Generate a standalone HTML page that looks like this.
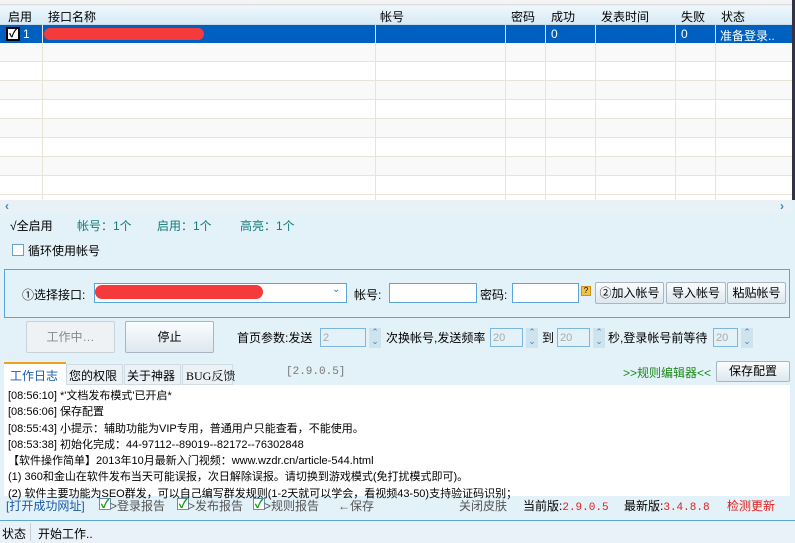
<!DOCTYPE html>
<html><head><meta charset="utf-8"><style>
*{box-sizing:border-box;margin:0;padding:0}
body{width:795px;height:543px;overflow:hidden;background:#e3f1f8;font-family:"Liberation Sans","Noto Sans CJK SC",sans-serif;font-size:12px;color:#000;position:relative}
.a{position:absolute;white-space:nowrap}
.hdr{position:absolute;left:0;top:6px;width:792px;height:19px;background:linear-gradient(#eef7fc,#d6eaf6);border-bottom:1px solid #c8dce8}
.row{position:absolute;left:0;width:792px;height:19px;border-bottom:1px solid #e8e4d6}
.vl{position:absolute;width:1px;background:#e8e4d6}
.inp{position:absolute;background:#fff;border:1px solid #5aa5d8}
.dis{position:absolute;background:#e3f1f8;border:1px solid #7fb6dc;color:#aaa;font-size:11px;padding-left:2px;line-height:18px}
.spin{position:absolute;width:12px;height:20px;background:#cfe3ef;color:#3a86c0;font-size:9px;line-height:9px;text-align:center}
.btn{position:absolute;background:linear-gradient(#fbfdfe,#dde7ee);border:1px solid #a9b6c0;border-radius:2px;text-align:center;line-height:20px;font-size:12px}
.cb{position:absolute;width:12px;height:12px;border:1px solid #6a9fc4;background:#fff}
.gc{position:absolute;width:12px;height:12px;border:1px solid #6a8fa8;background:#fff;color:#1a9a1a;font-size:12px;line-height:10px;text-align:center;font-weight:bold}
</style></head><body>
<div class="a" style="left:0;top:0;width:795px;height:5px;background:#f4f4f4;border-bottom:1px solid #ddd"></div>
<div class="hdr"></div>
<div class="a" style="left:8px;top:8px">启用</div>
<div class="a" style="left:48px;top:8px">接口名称</div>
<div class="a" style="left:380px;top:8px">帐号</div>
<div class="a" style="left:511px;top:8px">密码</div>
<div class="a" style="left:551px;top:8px">成功</div>
<div class="a" style="left:601px;top:8px">发表时间</div>
<div class="a" style="left:681px;top:8px">失败</div>
<div class="a" style="left:721px;top:8px">状态</div>
<div class="row" style="top:25px;background:#0060c0;border-bottom:none;height:18px"></div>
<div class="a" style="left:6px;top:27px;width:14px;height:14px;background:#fff;border:2px solid #000;font-size:11px;line-height:10px;text-align:center;font-weight:bold">✓</div>
<div class="a" style="left:23px;top:27px;color:#fff">1</div>
<div class="a" style="left:44px;top:28px;width:160px;height:12px;background:#f43a3a;border-radius:6px"></div>
<div class="a" style="left:551px;top:27px;color:#fff">0</div>
<div class="a" style="left:681px;top:27px;color:#fff">0</div>
<div class="a" style="left:720px;top:27px;color:#fff">准备登录..</div>
<div class="row" style="top:43px;background:#f9f9f9"></div>
<div class="row" style="top:62px;background:#fff"></div>
<div class="row" style="top:81px;background:#f9f9f9"></div>
<div class="row" style="top:100px;background:#fff"></div>
<div class="row" style="top:119px;background:#f9f9f9"></div>
<div class="row" style="top:138px;background:#fff"></div>
<div class="row" style="top:157px;background:#f9f9f9"></div>
<div class="row" style="top:176px;background:#fff"></div>
<div class="a" style="left:0;top:195px;width:792px;height:5px;background:#fff"></div>
<div class="vl" style="left:42px;top:25px;height:175px"></div>
<div class="vl" style="left:375px;top:25px;height:175px"></div>
<div class="vl" style="left:505px;top:25px;height:175px"></div>
<div class="vl" style="left:545px;top:25px;height:175px"></div>
<div class="vl" style="left:595px;top:25px;height:175px"></div>
<div class="vl" style="left:675px;top:25px;height:175px"></div>
<div class="vl" style="left:715px;top:25px;height:175px"></div>
<div class="a" style="left:792px;top:0;width:3px;height:200px;background:#334"></div>
<div class="a" style="left:0;top:200px;width:792px;height:14px;background:#e8f1f6"></div>
<div class="a" style="left:5px;top:199px;color:#3a86c0;font-weight:bold">‹</div>
<div class="a" style="left:780px;top:199px;color:#3a86c0;font-weight:bold">›</div>
<div class="a" style="left:10px;top:217px">√全启用</div>
<div class="a" style="left:77px;top:217px;color:#127a7a">帐号：1个</div>
<div class="a" style="left:157px;top:217px;color:#127a7a">启用：1个</div>
<div class="a" style="left:240px;top:217px;color:#127a7a">高亮：1个</div>
<div class="cb" style="left:12px;top:244px"></div>
<div class="a" style="left:28px;top:242px">循环使用帐号</div>
<div class="a" style="left:4px;top:269px;width:786px;height:49px;border:1px solid #5aa5d8"></div>
<div class="a" style="left:22px;top:286px">①选择接口:</div>
<div class="inp" style="left:94px;top:283px;width:253px;height:20px"></div>
<div class="a" style="left:95px;top:285px;width:168px;height:14px;background:#f43a3a;border-radius:7px"></div>
<div class="a" style="left:332px;top:284px;color:#3a86c0;font-size:10px">⌄</div>
<div class="a" style="left:354px;top:286px">帐号:</div>
<div class="inp" style="left:389px;top:283px;width:88px;height:20px"></div>
<div class="a" style="left:480px;top:286px">密码:</div>
<div class="inp" style="left:512px;top:283px;width:67px;height:20px"></div>
<div class="a" style="left:581px;top:286px;width:10px;height:10px;background:#f2c24a;border:1px solid #d09020;font-size:8px;line-height:8px;text-align:center">?</div>
<div class="btn" style="left:595px;top:282px;width:69px;height:22px">②加入帐号</div>
<div class="btn" style="left:666px;top:282px;width:60px;height:22px">导入帐号</div>
<div class="btn" style="left:727px;top:282px;width:59px;height:22px">粘贴帐号</div>
<div class="btn" style="left:26px;top:321px;width:89px;height:32px;line-height:30px;color:#888;background:#eef2f4;border-color:#c8d2d8">工作中…</div>
<div class="btn" style="left:125px;top:321px;width:89px;height:32px;line-height:30px">停止</div>
<div class="a" style="left:237px;top:329px">首页参数:发送</div>
<div class="dis" style="left:320px;top:328px;width:46px;height:19px">2</div>
<div class="spin" style="left:369px;top:328px">⌃<br>⌄</div>
<div class="a" style="left:386px;top:329px">次换帐号,发送频率</div>
<div class="dis" style="left:490px;top:328px;width:33px;height:19px">20</div>
<div class="spin" style="left:526px;top:328px">⌃<br>⌄</div>
<div class="a" style="left:542px;top:329px">到</div>
<div class="dis" style="left:557px;top:328px;width:33px;height:19px">20</div>
<div class="spin" style="left:593px;top:328px">⌃<br>⌄</div>
<div class="a" style="left:608px;top:329px">秒,登录帐号前等待</div>
<div class="dis" style="left:713px;top:328px;width:25px;height:19px">20</div>
<div class="spin" style="left:741px;top:328px">⌃<br>⌄</div>
<div class="a" style="left:4px;top:362px;width:62px;height:23px;background:#fff;border-top:2px solid #f0a020"></div>
<div class="a" style="left:10px;top:367px;color:#1a5aa8">工作日志</div>
<div class="a" style="left:66px;top:364px;width:57px;height:21px;background:#eaf2f6;border:1px solid #d0dce4"></div>
<div class="a" style="left:69px;top:367px">您的权限</div>
<div class="a" style="left:124px;top:364px;width:57px;height:21px;background:#eaf2f6;border:1px solid #d0dce4"></div>
<div class="a" style="left:127px;top:367px">关于神器</div>
<div class="a" style="left:182px;top:364px;width:51px;height:21px;background:#eaf2f6;border:1px solid #d0dce4"></div>
<div class="a" style="left:186px;top:367px;font-family:'Liberation Serif','Noto Serif CJK SC',serif">BUG反馈</div>
<div class="a" style="left:286px;top:366px;color:#777;font-family:'Liberation Mono',monospace;font-size:11px">[2.9.0.5]</div>
<div class="a" style="left:623px;top:364px;color:#1a8a1a">&gt;&gt;规则编辑器&lt;&lt;</div>
<div class="btn" style="left:716px;top:361px;width:74px;height:21px;line-height:19px">保存配置</div>
<div class="a" style="left:4px;top:385px;width:786px;height:111px;background:#fff;overflow:hidden"></div>
<div class="a" style="left:8px;top:388px;line-height:16.3px;font-size:11px">[08:56:10] *'文档发布模式'已开启*<br>[08:56:06] 保存配置<br>[08:55:43] 小提示：辅助功能为VIP专用，普通用户只能查看，不能使用。<br>[08:53:38] 初始化完成：44-97112--89019--82172--76302848<br>【软件操作简单】2013年10月最新入门视频：www.wzdr.cn/article-544.html<br>(1) 360和金山在软件发布当天可能误报，次日解除误报。请切换到游戏模式(免打扰模式即可)。<br>(2) 软件主要功能为SEO群发，可以自己编写群发规则(1-2天就可以学会，看视频43-50)支持验证码识别；</div>
<div class="a" style="left:6px;top:497px;color:#1a5aa8">[打开成功网址]</div>
<div class="gc" style="left:99px;top:498px">✓</div><div class="a" style="left:110px;top:497px;color:#555">&gt;登录报告</div>
<div class="gc" style="left:177px;top:498px">✓</div><div class="a" style="left:188px;top:497px;color:#555">&gt;发布报告</div>
<div class="gc" style="left:253px;top:498px">✓</div><div class="a" style="left:264px;top:497px;color:#555">&gt;规则报告</div>
<div class="a" style="left:338px;top:497px;color:#555">←保存</div>
<div class="a" style="left:459px;top:497px;color:#555">关闭皮肤</div>
<div class="a" style="left:523px;top:497px">当前版:<span style="color:#e02020;font-family:'Liberation Mono',monospace;font-size:11px">2.9.0.5</span></div>
<div class="a" style="left:624px;top:497px">最新版:<span style="color:#e02020;font-family:'Liberation Mono',monospace;font-size:11px">3.4.8.8</span></div>
<div class="a" style="left:727px;top:497px;color:#e02020">检测更新</div>
<div class="a" style="left:0;top:520px;width:795px;height:1px;background:#5aa5d8"></div>
<div class="a" style="left:0;top:521px;width:795px;height:22px;background:#e8f2f8"></div>
<div class="a" style="left:2px;top:525px">状态</div>
<div class="a" style="left:30px;top:523px;width:1px;height:18px;background:#ccc"></div>
<div class="a" style="left:38px;top:525px">开始工作..</div>
</body></html>
